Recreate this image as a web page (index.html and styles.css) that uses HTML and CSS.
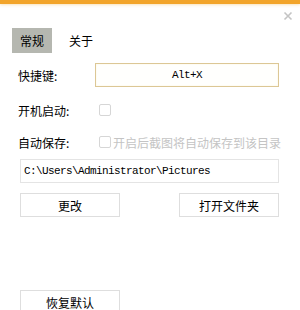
FILE: index.html
```html
<!DOCTYPE html>
<html>
<head>
<meta charset="utf-8">
<link rel="stylesheet" href="styles.css">
</head>
<body>
<div class="window">
  <div class="topbar"></div>
  <div class="titlebar">
    <svg class="close" width="10" height="10" viewBox="0 0 10 10"><path d="M1.5 1.5 L8.5 8.5 M8.5 1.5 L1.5 8.5" stroke="#c4c4c4" stroke-width="1.6" fill="none"/></svg>
  </div>
  <div class="tabs">
    <div class="tab active">常规</div>
    <div class="tab">关于</div>
  </div>
  <div class="form">
    <div class="row row-hotkey">
      <span class="label">快捷键:</span>
      <div class="hotkey">Alt+X</div>
    </div>
    <div class="row row-check">
      <span class="label">开机启动:</span>
      <span class="checkbox"></span>
    </div>
    <div class="row row-check row-save">
      <span class="label">自动保存:</span>
      <span class="checkbox"></span>
      <span class="hint">开启后截图将自动保存到该目录</span>
    </div>
    <div class="path">C:\Users\Administrator\Pictures</div>
    <div class="buttons">
      <div class="btn">更改</div>
      <div class="btn">打开文件夹</div>
    </div>
    <div class="buttons reset">
      <div class="btn">恢复默认</div>
    </div>
  </div>
</div>
</body>
</html>
```
FILE: styles.css
```css
html, body {
  margin: 0;
  padding: 0;
  background: #ffffff;
}
.window {
  width: 300px;
  height: 310px;
  overflow: hidden;
  font-family: "Noto Sans CJK SC", "Liberation Sans", sans-serif;
  font-size: 12px;
  color: #000;
  display: flex;
  flex-direction: column;
}
.topbar {
  height: 4px;
  flex: none;
  background: #f2a42a;
  box-shadow: 0 1px 3px rgba(245, 200, 120, 0.5);
}
.titlebar {
  height: 24px;
  flex: none;
  display: flex;
  justify-content: flex-end;
  align-items: center;
  padding-right: 7px;
}
.close { display: block; }
.tabs {
  display: flex;
  gap: 9px;
  padding-left: 12px;
  height: 25px;
  flex: none;
}
.tab {
  height: 25px;
  line-height: 25px;
  padding: 0 8px;
}
.tab.active {
  background: #b5b7b0;
}
.form {
  display: flex;
  flex-direction: column;
  padding: 0 21px 0 20px;
}
.row {
  display: flex;
  align-items: center;
  margin-left: -2px;
}
.row-hotkey {
  margin-top: 10px;
  height: 24px;
}
.label {
  width: 77px;
  flex: none;
}
.hotkey {
  flex: 1;
  height: 22px;
  border: 1px solid #dcc795;
  box-shadow: inset 0 0 2px #fbf3dc;
  background: #fffffd;
  display: flex;
  align-items: center;
  justify-content: center;
  font-family: "Liberation Mono", monospace;
  font-size: 11px;
  letter-spacing: -0.6px;
  color: #000;
}
.row-check {
  margin-top: 12px;
  height: 22px;
}
.row-save {
  margin-top: 10px;
}
.checkbox {
  width: 10px;
  height: 10px;
  border: 1px solid #d6d6d6;
  border-radius: 2px;
  margin-left: 4px;
  flex: none;
}
.hint {
  color: #c4c4c4;
  margin-left: 2px;
  white-space: nowrap;
}
.path {
  margin-top: 6px;
  height: 22px;
  border: 1px solid #e4e4e4;
  display: flex;
  align-items: center;
  padding-left: 3px;
  font-family: "Liberation Mono", monospace;
  font-size: 11px;
  letter-spacing: -0.6px;
  color: #000;
}
.buttons {
  margin-top: 10px;
  display: flex;
  justify-content: space-between;
}
.btn {
  width: 98px;
  height: 22px;
  border: 1px solid #dedede;
  display: flex;
  align-items: center;
  justify-content: center;
  background: #fff;
}
.reset {
  margin-top: 73px;
}
```
